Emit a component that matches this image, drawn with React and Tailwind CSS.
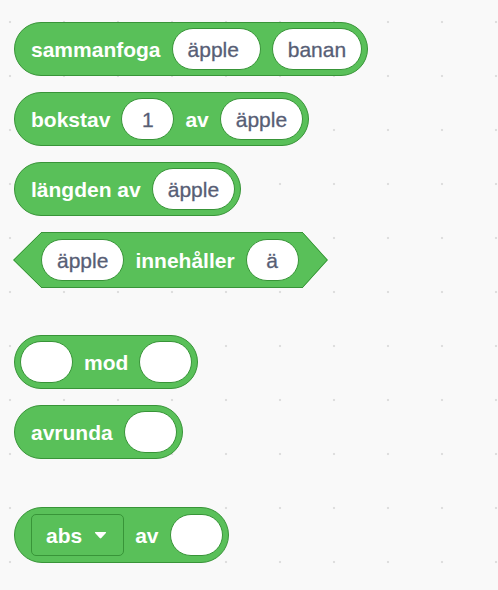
import React from "react";

const font = { fontFamily: '"Liberation Sans", Arial, sans-serif' };

function Label({ children }) {
  return <span className="text-[21px] font-bold leading-none text-white">{children}</span>;
}

function Field({ children }) {
  return (
    <div className="flex h-[42px] min-w-[53px] items-center justify-center whitespace-pre rounded-full border border-[#389438] bg-white px-[15px] text-[21px] leading-none text-[#575e75] [-webkit-text-stroke:0.3px_#575e75]">
      {children}
    </div>
  );
}

function Reporter({ className = "", children }) {
  return (
    <div className={`flex h-[54px] items-center gap-[11px] rounded-full border border-[#389438] bg-[#59c059] ${className}`}>
      {children}
    </div>
  );
}

function Boolean({ className = "", children }) {
  return (
    <div className={`flex h-[56px] items-stretch ${className}`}>
      <svg width="28" height="56" viewBox="0 0 28 56" className="block shrink-0">
        <path d="M28.5 0 L0 28 L28.5 56 Z" fill="#59c059" />
        <path d="M28.5 0.5 L0.8 28 L28.5 55.5" fill="none" stroke="#389438" strokeWidth="1" />
      </svg>
      <div className="flex items-center gap-[11px] border-y border-[#389438] bg-[#59c059] pr-[4px]">
        {children}
      </div>
      <svg width="25" height="56" viewBox="0 0 25 56" className="block shrink-0">
        <path d="M-0.5 0 L25 28 L-0.5 56 Z" fill="#59c059" />
        <path d="M-0.5 0.5 L24.2 28 L-0.5 55.5" fill="none" stroke="#389438" strokeWidth="1" />
      </svg>
    </div>
  );
}

export default function App() {
  return (
    <div
      style={font}
      className="min-h-screen bg-[#f9f9f9] bg-[radial-gradient(circle,#dedede_1px,transparent_1.6px)] bg-[size:54px_54px] bg-[position:-17px_-5px]"
    >
      <div className="flex flex-col items-start pl-[14px] pt-[22px]">
        {/* sammanfoga */}
        <Reporter className="pl-[16px] pr-[5px]">
          <Label>sammanfoga</Label>
          <Field>{"äpple "}</Field>
          <Field>banan</Field>
        </Reporter>

        {/* bokstav */}
        <Reporter className="mt-4 pl-[16px] pr-[5px]">
          <Label>bokstav</Label>
          <Field>1</Field>
          <Label>av</Label>
          <Field>äpple</Field>
        </Reporter>

        <Reporter className="mt-4 pl-[16px] pr-[5px]">
          <Label>längden av</Label>
          <Field>äpple</Field>
        </Reporter>

        <Boolean className="-ml-px mt-4">
          <Field>äpple</Field>
          <Label>innehåller</Label>
          <Field>ä</Field>
        </Boolean>

        <Reporter className="mt-[47px] px-[5px]">
          <Field />
          <Label>mod</Label>
          <Field />
        </Reporter>

        <Reporter className="mt-4 pl-[16px] pr-[5px]">
          <Label>avrunda</Label>
          <Field />
        </Reporter>

        {/* abs dropdown */}
        <Reporter className="mt-[48px] h-[56px] pl-[16px] pr-[5px]">
          <div className="flex h-[42px] items-center gap-[12px] rounded-[5px] border border-[#389438] bg-[#59c059] pl-[14px] pr-[16px]">
            <Label>abs</Label>
            <svg width="13" height="8" viewBox="0 0 13 8" className="block">
              <path d="M1.5 1 L11.5 1 Q12.6 1 11.9 1.9 L7.3 7 Q6.5 7.8 5.7 7 L1.1 1.9 Q0.4 1 1.5 1 Z" fill="#fff" />
            </svg>
          </div>
          <Label>av</Label>
          <Field />
        </Reporter>
      </div>
    </div>
  );
}
